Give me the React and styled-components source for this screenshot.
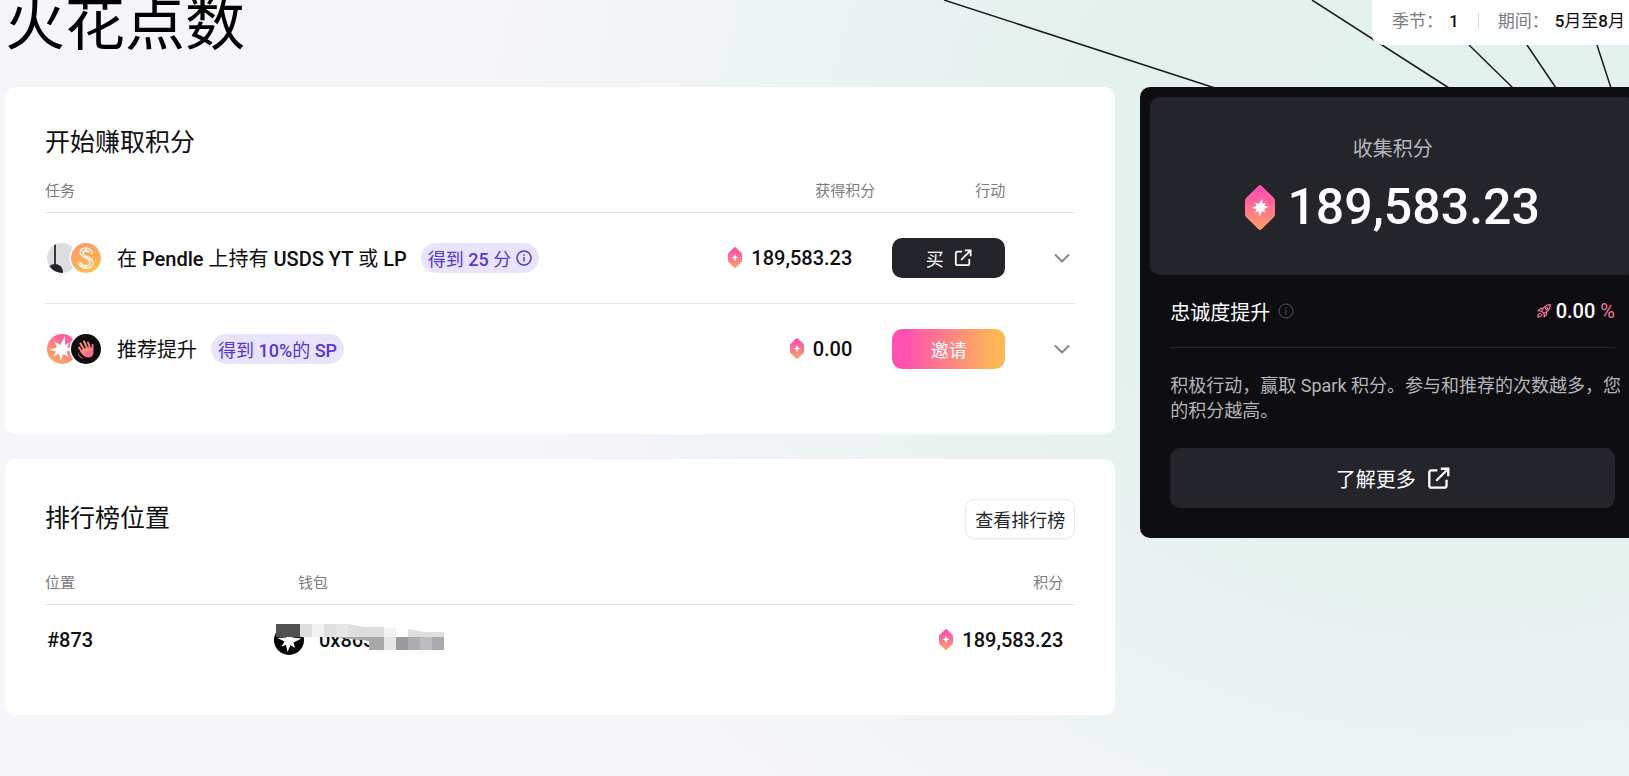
import React from 'react';
import styled, { createGlobalStyle } from 'styled-components';

const GlobalStyle = createGlobalStyle`
  * { box-sizing: border-box; }
  body {
    margin: 0;
    overflow: hidden;
    font-family: Roboto, "Noto Sans CJK SC", sans-serif;
    color: #0e0e12;
    background: #f5f5fa;
  }
  button, a { font-family: inherit; }
`;

const Page = styled.main`
  position: relative;
  min-height: 100vh;
  overflow: hidden;
  padding: 0 0 60px 5px;
  background:
    radial-gradient(ellipse 60% 110% at 90% 22%, #e2f1eb 0%, #e5f1ed 40%, rgba(245, 245, 250, 0) 100%),
    #f5f5fa;
`;

const Rays = styled.svg`
  position: absolute;
  top: 0;
  right: 0;
  width: 729px;
  height: 90px;
`;

const Content = styled.div`
  position: relative;
  margin-right: -16px;
`;

const Header = styled.header`
  display: flex;
  justify-content: space-between;
  align-items: flex-start;
  height: 87px;
`;

const Title = styled.h1`
  margin: -13px 0 0;
  font-size: 60px;
  line-height: 76px;
  font-weight: 400;
  color: #000;
`;

const Season = styled.dl`
  display: flex;
  align-items: center;
  height: 45px;
  margin: 0;
  padding: 0 20px 3px;
  border-radius: 0 0 10px 10px;
  background: #fff;
  font-size: 17px;
  line-height: 24px;
`;

const SeasonItem = styled.div`
  display: flex;
  gap: 6px;
  dt { color: #7b7b80; }
  dd { margin: 0; }
`;

const SeasonDivider = styled.span`
  width: 1px;
  height: 16px;
  margin: 0 19px;
  background: #dcdce0;
`;

const Medium = styled.span`
  font-weight: 500;
`;

const Columns = styled.div`
  display: grid;
  grid-template-columns: minmax(0, 11fr) minmax(0, 5fr);
  gap: 25px;
  align-items: start;
`;

const Stack = styled.div`
  display: grid;
  gap: 25px;
`;

const Card = styled.section`
  padding: 40px;
  border-radius: 10px;
  background: #fff;
`;

const CardHead = styled.div`
  display: flex;
  align-items: center;
  justify-content: space-between;
`;

const CardTitle = styled.h2`
  margin: 0;
  font-size: 25px;
  line-height: 32px;
  font-weight: 400;
`;

const OutlineButton = styled.button`
  height: 40px;
  padding: 0 9px;
  border: 1px solid #e9e9ee;
  border-radius: 10px;
  background: #fff;
  box-shadow: 0 1px 2px rgba(20, 20, 40, 0.05);
  color: #24252b;
  font-size: 18px;
`;

const Table = styled.table`
  width: 100%;
  table-layout: fixed;
  border-collapse: collapse;
  th {
    padding: 0 0 10px;
    height: ${(p) => p.$head}px;
    vertical-align: bottom;
    font-size: 15px;
    line-height: 22px;
    font-weight: 400;
    color: #7b7b80;
    text-align: left;
  }
  th.end { text-align: right; }
  thead tr { border-bottom: 1px solid #e6e6e9; }
  tbody tr + tr { border-top: 1px solid #e6e6e9; }
  td {
    height: ${(p) => p.$row}px;
    padding: 0;
    font-size: 20px;
  }
`;

const HeadInset = styled.span`
  padding-left: 24px;
`;

const HeadEnd = styled.span`
  padding-right: 12px;
`;

const Rank = styled.span`
  padding-left: 2px;
  font-weight: 500;
`;

const Task = styled.div`
  display: flex;
  align-items: center;
  padding-left: 2px;
`;

const TaskName = styled.span`
  margin: 0 14px 0 16px;
  white-space: nowrap;
`;

const Badge = styled.span`
  display: inline-flex;
  align-items: center;
  gap: 5px;
  height: 30px;
  padding: 0 7px;
  border-radius: 15px;
  background: #e8e4fb;
  color: #5a35d6;
  font-size: 18px;
  white-space: nowrap;
`;

const Points = styled.div`
  display: flex;
  align-items: center;
  justify-content: flex-end;
  gap: 9px;
  padding-right: ${(p) => p.$end}px;
  font-weight: 500;
`;

const ActionButton = styled.button`
  display: flex;
  align-items: center;
  justify-content: center;
  gap: 10px;
  width: 113px;
  height: 40px;
  margin-left: auto;
  padding: 0;
  border: 0;
  border-radius: 10px;
  background: ${(p) => (p.$accent ? 'linear-gradient(90deg, #ff51b0 12%, #fdb755 92%)' : '#24252b')};
  color: #fff;
  font-size: 18px;
`;

const ExpandButton = styled.button`
  display: flex;
  margin-left: auto;
  padding: 5px;
  border: 0;
  background: none;
  color: #85858b;
`;

const Wallet = styled.div`
  position: relative;
  display: flex;
  align-items: center;
  gap: 15px;
  font-weight: 500;
`;

const Mosaic = styled.svg`
  position: absolute;
  left: 2px;
  top: -1px;
`;

const Panel = styled.aside`
  padding: 10px 10px 30px;
  border-radius: 10px;
  background: #0e0e12;
  color: #fff;
`;

const Score = styled.div`
  display: flex;
  flex-direction: column;
  align-items: center;
  height: 178px;
  padding-top: 38px;
  border-radius: 10px;
  background: #24252b;
`;

const ScoreLabel = styled.span`
  font-size: 20px;
  line-height: 28px;
  color: #b5b5ba;
`;

const ScoreValue = styled.strong`
  display: flex;
  align-items: center;
  gap: 12px;
  margin-top: 14px;
  font-size: 50px;
  line-height: 60px;
  font-weight: 500;
`;

const Details = styled.div`
  padding: 0 20px;
`;

const Boost = styled.div`
  display: flex;
  align-items: center;
  justify-content: space-between;
  height: 73px;
  border-bottom: 1px solid #24252b;
  font-size: 20px;
`;

const BoostSide = styled.span`
  display: flex;
  align-items: center;
  gap: ${(p) => p.$gap}px;
`;

const Percent = styled.span`
  color: #f8759a;
`;

const Note = styled.p`
  margin: 25px -8px 25px 0;
  font-size: 18px;
  line-height: 25px;
  color: #b5b5ba;
`;

const MoreLink = styled.a`
  display: flex;
  align-items: center;
  justify-content: center;
  gap: 11px;
  height: 60px;
  border-radius: 10px;
  background: #24252b;
  color: #fff;
  font-size: 20px;
  text-decoration: none;
`;

const GEM_STAR = 'M17.200 13.500L17.600 19L21 17.600L19.300 20.600L23.500 22L19.300 24L20.300 27.600L17 26L14.200 32L13.400 26L10 28L11.600 24.300L6.500 22.800L11.600 20.800L9.800 17.400L13.800 19Z';
const GEM_PLUS = 'M15 14.500L17 20.500L23 22.500L17 24.500L15 30.500L13 24.500L7 22.500L13 20.500Z';

const Gem = ({ width, id, detailed }) => (
  <svg width={width} height={width * 1.5} viewBox="0 0 30 45" aria-hidden="true">
    <defs>
      <linearGradient id={id} x1="0" y1="0" x2="0" y2="1">
        <stop offset="0.1" stopColor="#fd4fae" />
        <stop offset="1" stopColor="#fda068" />
      </linearGradient>
    </defs>
    <path d="M13.200 1Q15 -1 16.800 1L28.500 12.500Q30 14 30 16V29Q30 31 28.500 32.500L16.800 44Q15 46 13.200 44L1.500 32.500Q0 31 0 29V16Q0 14 1.500 12.500Z" fill={`url(#${id})`} />
    <path d={detailed ? GEM_STAR : GEM_PLUS} fill="#fff" />
  </svg>
);

const External = ({ size, stroke = 2 }) => (
  <svg width={size} height={size} viewBox="0 0 20 20" fill="none" stroke="currentColor" strokeWidth={stroke} aria-hidden="true">
    <path d="M9 3H4Q2 3 2 5V16Q2 18 4 18H15Q17 18 17 16V11" />
    <path d="M8 12L18 2M12 1.500H18.500V8" />
  </svg>
);

const Info = ({ size, stroke, color }) => (
  <svg width={size} height={size} viewBox="0 0 16 16" fill="none" stroke={color} strokeWidth={stroke} aria-hidden="true">
    <circle cx="8" cy="8" r="7" />
    <path d="M8 7V11.500M8 4.200V5.700" />
  </svg>
);

const Chevron = () => (
  <svg width="16" height="16" viewBox="0 0 16 16" fill="none" stroke="currentColor" strokeWidth="2" strokeLinecap="round" strokeLinejoin="round" aria-hidden="true">
    <path d="M1.500 5L8 11.500L14.500 5" />
  </svg>
);

const PendleIcons = () => (
  <svg width="54" height="30" viewBox="0 0 54 30" aria-hidden="true">
    <defs>
      <clipPath id="pendle"><circle cx="15" cy="15" r="15" /></clipPath>
      <linearGradient id="usds" x1="0" y1="0" x2="0.500" y2="1">
        <stop offset="0" stopColor="#fb946f" />
        <stop offset="1" stopColor="#ffbb4f" />
      </linearGradient>
    </defs>
    <g clipPath="url(#pendle)">
      <rect width="30" height="30" fill="#dddde0" />
      <path d="M8 1V24" stroke="#24252b" strokeWidth="1.800" />
      <circle cx="8" cy="29" r="8" fill="#24252b" />
    </g>
    <circle cx="39" cy="15" r="16.500" fill="#fff" />
    <circle cx="39" cy="15" r="15" fill="url(#usds)" />
    <g fill="none" stroke="#fff" strokeWidth="1.400">
      <path d="M45 10.500C44.500 3.500 33 3.500 33 9.500C33 15 43 14 43 19.500C43 24 34.500 24 33.500 19" />
      <path d="M42 10C41 7 36 7 36 10C36 14 46 14 46 19.500C46 27 33 27 31.500 19.500" />
      <path d="M39 4V7M39 23V26" />
    </g>
  </svg>
);

const ReferralIcons = () => (
  <svg width="54" height="30" viewBox="0 0 54 30" aria-hidden="true">
    <defs>
      <linearGradient id="spark" x1="0.800" y1="0" x2="0.200" y2="1">
        <stop offset="0" stopColor="#fd4fae" />
        <stop offset="1" stopColor="#fdae59" />
      </linearGradient>
      <linearGradient id="hand" x1="0" y1="0" x2="0.600" y2="1">
        <stop offset="0" stopColor="#fba06c" />
        <stop offset="1" stopColor="#fb6496" />
      </linearGradient>
    </defs>
    <circle cx="15" cy="15" r="15" fill="url(#spark)" />
    <path d="M17.800 2L18 11L22.500 8.500L20 13L26 16L19.500 17.500L22 23.500L16.500 20L13.500 27L12 19.500L6.500 22.500L9 17.500L2.500 15.500L10 13.500L7.500 7.500L13.500 11Z" fill="#fff" />
    <circle cx="39" cy="15" r="16.500" fill="#fff" />
    <circle cx="39" cy="15" r="15" fill="#0e0e12" />
    <g fill="none" stroke="url(#hand)" strokeWidth="2" strokeLinecap="round">
      <path d="M35 18L32 13.500M37 16L33.500 9.500M40 14L37 7.500M43 14L41 8.500M45.500 16L45.600 11" />
    </g>
    <path d="M33 17.500L37 14.500L43 13L46 15L46.500 19Q45.500 23.500 41.500 23.500Q38 23.500 35.500 20.800Z" fill="url(#hand)" />
    <path d="M31 20Q32.500 23 35.500 24" fill="none" stroke="#fb6496" />
  </svg>
);

const Avatar = () => (
  <svg width="30" height="30" viewBox="0 0 30 30" aria-hidden="true">
    <circle cx="15" cy="15" r="15" fill="#000" />
    <path d="M3.500 13L12.500 12.500V7H18.500V12.500L27.500 13.500L19.500 17.500L21 23L16.500 20L13.500 27L12 20L7.500 21.500L10.500 16.500Z" fill="#fff" />
  </svg>
);

const Rocket = () => (
  <svg width="14" height="14" viewBox="0 0 14 14" fill="none" stroke="#f8759a" strokeWidth="1.200" strokeLinejoin="round" aria-hidden="true">
    <path d="M13.300 0.700Q8 0.500 4.500 7L7 9.500Q13.500 6 13.300 0.700Z" />
    <path d="M6.500 4.500L3.500 4.300L1.200 6.800L4.500 7M9.500 7.500L9.700 10.500L7.200 12.800L7 9.500" />
    <path d="M4 9L1.500 10.200L0.800 13.200L3.800 12.500L5 10" />
    <circle cx="9.500" cy="4.500" r="1.100" />
  </svg>
);

const MOSAIC_TOP = ['#505052', '#505052', '#dddddd', '#f2f2f2', '#e0e0e1', '#e6e6e7'];
const MOSAIC_BOTTOM = ['#a9a9ac', '#e6e6e8', '#9b9a9e', '#adadb1', '#bdbcc1', '#a9aaad'];

const Redaction = () => (
  <Mosaic width="170" height="26" viewBox="0 0 170 26" aria-hidden="true">
    {MOSAIC_TOP.map((fill, i) => <rect key={i} x={i * 12} width="12" height="13" fill={fill} />)}
    <path d="M72 0L88 3H108V13L84 16L60 13H72Z" fill="#dedee0" />
    <path d="M60 13H96V17L74 15Z" fill="#a9a9ac" />
    <rect x="108" y="4" width="12" height="9" fill="#f2f2f3" />
    <path d="M132 5L148 8H168V13H132Z" fill="#dedee0" />
    <rect x="93" y="13" width="4" height="13" fill="#a9a9ac" />
    {MOSAIC_BOTTOM.map((fill, i) => <rect key={i} x={96 + i * 12} y="13" width="12" height="13" fill={fill} />)}
  </Mosaic>
);

export default function App() {
  return (
    <>
      <GlobalStyle />
      <Page>
        <Rays viewBox="0 0 729 90" fill="none" stroke="#1c1c20" strokeWidth="1.500" aria-hidden="true">
          <path d="M44 0L315 88M412 0L549 88M569 45L613 88M627 45L656 88M697 45L711 88" />
        </Rays>
        <Content>
          <Header>
            <Title>火花点数</Title>
            <Season>
              <SeasonItem><dt>季节：</dt><dd><Medium>1</Medium></dd></SeasonItem>
              <SeasonDivider />
              <SeasonItem><dt>期间：</dt><dd><Medium>5</Medium>月至<Medium>8</Medium>月</dd></SeasonItem>
            </Season>
          </Header>
          <Columns>
            <Stack>
              <Card>
                <CardTitle>开始赚取积分</CardTitle>
                <Table $head={53} $row={91}>
                  <colgroup>
                    <col />
                    <col style={{ width: 180 }} />
                    <col style={{ width: 130 }} />
                    <col style={{ width: 70 }} />
                  </colgroup>
                  <thead>
                    <tr>
                      <th>任务</th>
                      <th className="end">获得积分</th>
                      <th className="end">行动</th>
                      <th aria-label="展开" />
                    </tr>
                  </thead>
                  <tbody>
                    <tr>
                      <td>
                        <Task>
                          <PendleIcons />
                          <TaskName>在 <Medium>Pendle</Medium> 上持有 <Medium>USDS YT</Medium> 或 <Medium>LP</Medium></TaskName>
                          <Badge>
                            <span>得到 <Medium>25</Medium> 分</span>
                            <Info size={16} stroke={1.5} color="currentColor" />
                          </Badge>
                        </Task>
                      </td>
                      <td><Points $end={23}><Gem width={14} id="gem-hold" />189,583.23</Points></td>
                      <td><ActionButton>买 <External size={18} /></ActionButton></td>
                      <td><ExpandButton aria-label="展开"><Chevron /></ExpandButton></td>
                    </tr>
                    <tr>
                      <td>
                        <Task>
                          <ReferralIcons />
                          <TaskName>推荐提升</TaskName>
                          <Badge>
                            <span>得到 <Medium>10%</Medium>的 <Medium>SP</Medium></span>
                          </Badge>
                        </Task>
                      </td>
                      <td><Points $end={23}><Gem width={14} id="gem-refer" />0.00</Points></td>
                      <td><ActionButton $accent>邀请</ActionButton></td>
                      <td><ExpandButton aria-label="展开"><Chevron /></ExpandButton></td>
                    </tr>
                  </tbody>
                </Table>
              </Card>
              <Card>
                <CardHead>
                  <CardTitle>排行榜位置</CardTitle>
                  <OutlineButton>查看排行榜</OutlineButton>
                </CardHead>
                <Table $head={65} $row={71}>
                  <colgroup>
                    <col style={{ width: 229 }} />
                    <col />
                    <col style={{ width: 180 }} />
                  </colgroup>
                  <thead>
                    <tr>
                      <th>位置</th>
                      <th><HeadInset>钱包</HeadInset></th>
                      <th className="end"><HeadEnd>积分</HeadEnd></th>
                    </tr>
                  </thead>
                  <tbody>
                    <tr>
                      <td><Rank>#873</Rank></td>
                      <td><Wallet><Avatar />0x863<Redaction /></Wallet></td>
                      <td><Points $end={12}><Gem width={14} id="gem-board" />189,583.23</Points></td>
                    </tr>
                  </tbody>
                </Table>
              </Card>
            </Stack>
            <Panel>
              <Score>
                <ScoreLabel>收集积分</ScoreLabel>
                <ScoreValue><Gem width={30} id="gem-total" detailed />189,583.23</ScoreValue>
              </Score>
              <Details>
                <Boost>
                  <BoostSide $gap={8}>忠诚度提升 <Info size={16} stroke={1} color="#55555b" /></BoostSide>
                  <BoostSide $gap={5}><Rocket /><Medium>0.00</Medium><Percent>%</Percent></BoostSide>
                </Boost>
                <Note>积极行动，赢取 Spark 积分。参与和推荐的次数越多，您的积分越高。</Note>
                <MoreLink href="#more">了解更多 <External size={23} /></MoreLink>
              </Details>
            </Panel>
          </Columns>
        </Content>
      </Page>
    </>
  );
}
